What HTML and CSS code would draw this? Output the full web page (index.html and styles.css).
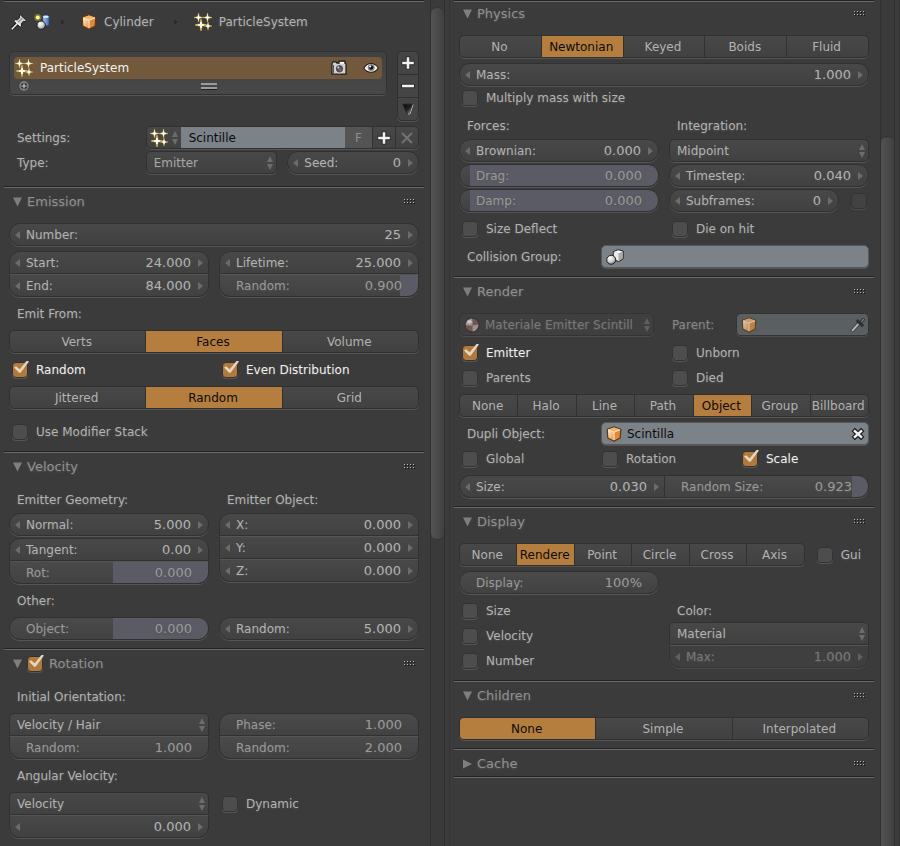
FILE: index.html
```html
<!DOCTYPE html>
<html lang="en">
<head>
<meta charset="utf-8">
<title>Particle properties</title>
<link rel="stylesheet" href="styles.css">
</head>
<body>
<svg class="defs" aria-hidden="true">
  <defs>
    <linearGradient id="g-cube" x1="0" y1="0" x2="1" y2="1"><stop offset="0" stop-color="#fff0dc"/><stop offset="1" stop-color="#e8913a"/></linearGradient>
    <radialGradient id="g-ball" cx=".38" cy=".32" r=".7"><stop offset="0" stop-color="#fff"/><stop offset=".6" stop-color="#ccc"/><stop offset="1" stop-color="#777"/></radialGradient>
    <linearGradient id="g-blue" x1="0" y1="0" x2="1" y2="0"><stop offset="0" stop-color="#a9c8f0"/><stop offset="1" stop-color="#3c6db5"/></linearGradient>
    <linearGradient id="g-tri" x1="0" y1="0" x2="1" y2="1"><stop offset="0" stop-color="#050505"/><stop offset=".5" stop-color="#222"/><stop offset="1" stop-color="#aaa"/></linearGradient>
  </defs>
  <symbol id="star" viewBox="0 0 10 10"><path d="M5 0 5.8 4.2 10 5 5.8 5.8 5 10 4.2 5.8 0 5 4.2 4.2Z" fill="#b5953f" stroke="#8a7330" stroke-width="1.4" stroke-opacity=".7"/><path d="M5 .4V9.6M.4 5H9.6" stroke="#e3ca70" stroke-width="1.1"/><path d="M5 2.5V7.5M2.5 5H7.5" stroke="#fff" stroke-width="1.4"/><circle cx="5" cy="5" r="1.4" fill="#fff"/></symbol>
  <symbol id="sparkles" viewBox="0 0 18 18"><use href="#star" x="0" y="0" width="9" height="9"/><use href="#star" x="9" y="0" width="9" height="9"/><use href="#star" x="1" y="6" width="12" height="12"/><use href="#star" x="10" y="9" width="8" height="8"/></symbol>
  <symbol id="cube" viewBox="0 0 16 16"><path d="M8 .8 14.8 3.2 14.2 12 8 15.3 1.8 12 1.2 3.2Z" fill="#dd8a3b" stroke="#5c3816" stroke-width="1.2" stroke-linejoin="round"/><path d="M8 1.5 14 3.5 8 6 2 3.5Z" fill="#f6b36b"/><path d="M2 4 7.6 6.4V14L2.6 11.5Z" fill="url(#g-cube)"/><path d="M2 3.8 8 6.2 14 3.8M8 6.2V14" fill="none" stroke="#fff0dc" stroke-width="1"/></symbol>
  <symbol id="pin" viewBox="0 0 16 16"><path d="M1 15 6 9.5" stroke="#1c1c1c" stroke-width="3.4"/><path d="M9.3.8 15.2 6.3 14 7.6 12.3 7.3 10.4 9.6 10.6 12 9.2 13.2 2.6 7 3.9 5.7 6.4 5.8 8.7 3.7 8.2 2Z" fill="#dadada" stroke="#1c1c1c" stroke-width="1" stroke-linejoin="round"/><path d="M.8 15.2 6.3 9.4" stroke="#f0f0f0" stroke-width="1.5"/><path d="M7.2 8.2 11.5 4.3" stroke="#8e8e8e" stroke-width="1.4"/><path d="M4.2 6.8 9 11.4" stroke="#fff" stroke-width=".9"/></symbol>
  <symbol id="scene" viewBox="0 0 16 16"><circle cx="3.8" cy="3.5" r="3.6" fill="#77732a"/><circle cx="3.8" cy="3.5" r="2" fill="#fff88c"/><path d="M8.7 2.3Q12 .2 15.2 2.3V11.2Q12 13 8.7 11.2Z" fill="url(#g-blue)" stroke="#25436c"/><ellipse cx="11.9" cy="2.7" rx="2.9" ry="1.2" fill="#dcebff"/><circle cx="7.2" cy="11.2" r="4.2" fill="url(#g-ball)" stroke="#222"/></symbol>
  <symbol id="camera" viewBox="0 0 16 16"><path d="M1 3.5 2.2 1.8H5L6 3.2H8V1.2H14V3.2L15 4V14.2H1Z" fill="#cfcfcf" stroke="#191919" stroke-width="1.2"/><path d="M9 2.8H13" stroke="#fff" stroke-width="1.5"/><path d="M2.5 5V13" stroke="#555"/><circle cx="8.5" cy="8.8" r="4.2" fill="#555" stroke="#fff" stroke-width=".7"/><circle cx="8.5" cy="8.8" r="2.8" fill="#44516d"/><circle cx="9.3" cy="9.8" r="1.6" fill="#b44a42"/><circle cx="7.4" cy="7.5" r="1" fill="#d7e1ff"/></symbol>
  <symbol id="eye" viewBox="0 0 16 16"><path d="M.8 8.2Q4 3.2 8.5 3.5 13 4 15.3 8 12.5 12.4 8 12.3 3.5 12.2.8 8.2Z" fill="#f4f4f4" stroke="#241b12" stroke-width="1.1"/><circle cx="8.2" cy="7.6" r="3.5" fill="#888"/><circle cx="8.2" cy="7.6" r="2.1" fill="#111"/><circle cx="7.2" cy="6.5" r="1" fill="#fff"/></symbol>
  <symbol id="plus" viewBox="0 0 16 16"><path d="M8 1.5V14.5M1.5 8H14.5" stroke="#262626" stroke-width="4.4"/><path d="M8 2.2V13.8M2.2 8H13.8" stroke="#f2f2f2" stroke-width="2.6"/></symbol>
  <symbol id="minus" viewBox="0 0 16 16"><path d="M1 8H15" stroke="#262626" stroke-width="4.4"/><path d="M2 8H14" stroke="#f2f2f2" stroke-width="2.6"/></symbol>
  <symbol id="wedge" viewBox="0 0 16 16"><path d="M2.8 3.2H13.4L10.2 13H7.2Z" fill="url(#g-tri)" stroke="#222"/><path d="M13.2 3.4 10 13H7.8" fill="none" stroke="#b4b4b4" stroke-width="1"/></symbol>
  <symbol id="cross" viewBox="0 0 16 16"><path d="M3 3 13 13M13 3 3 13" stroke="currentColor" stroke-width="2"/></symbol>
  <symbol id="clear" viewBox="0 0 16 16"><path d="M3.2 3.6 12.8 12.4M12.8 3.6 3.2 12.4" stroke="#1b1b1b" stroke-width="4.8"/><path d="M4 4.3 12 11.7M12 4.3 4 11.7" stroke="#f6f6f6" stroke-width="2.4"/></symbol>
  <symbol id="updown" viewBox="0 0 8 16"><path d="M4 1 7 7H1ZM4 15 1 9H7Z" fill="currentColor"/></symbol>
  <symbol id="left" viewBox="0 0 6 8"><path d="M5 0V8L0 4Z" fill="currentColor"/></symbol>
  <symbol id="right" viewBox="0 0 6 8"><path d="M1 0V8L6 4Z" fill="currentColor"/></symbol>
  <symbol id="open" viewBox="0 0 10 10"><path d="M0 0H10L5 10Z" fill="currentColor"/></symbol>
  <symbol id="closed" viewBox="0 0 10 10"><path d="M0 0V10L10 5Z" fill="currentColor"/></symbol>
  <symbol id="grip" viewBox="0 0 12 5"><path d="M1 1.5H12M1 4.5H12" stroke="#111" stroke-dasharray="1 2"/><path d="M0 .5H12M0 3.5H12" stroke="#b5b5b5" stroke-dasharray="1 2"/></symbol>
  <symbol id="ring" viewBox="0 0 10 10"><circle cx="5" cy="5" r="4" fill="#333" stroke="#8c8c8c" stroke-width="1.3"/><path d="M5 2.5V7.5M2.5 5H7.5" stroke="#a8a8a8" stroke-width="1.6"/></symbol>
  <symbol id="group" viewBox="0 0 18 16"><path d="M7.3 2.6 12 .8 17.2 2V9.8L12.6 12.6 7.3 10.5Z" fill="#c9c9c9" stroke="#222" stroke-linejoin="round"/><path d="M8 3 12.2 1.5 16.4 2.4 12.6 4Z" fill="#fff"/><path d="M7.9 3.3 12.4 4.4V11.6L7.9 10Z" fill="#ebebeb"/><path d="M12.8 4.4 16.5 2.8V9.5L12.8 11.8Z" fill="#aaa"/><circle cx="5.2" cy="10.8" r="4.5" fill="url(#g-ball)" stroke="#222"/></symbol>
  <symbol id="material" viewBox="0 0 16 16"><circle cx="8" cy="8" r="7" fill="#8a5a55" stroke="#292929"/><path d="M8 1.5Q9 5 8.6 8.5 5 9 1.5 8 1.8 2.5 8 1.5ZM8.6 8.5 14.5 7.4Q14 13.5 8.5 14.6Z" fill="#b5afad"/><ellipse cx="5.4" cy="4.8" rx="2.4" ry="1.9" fill="#f2f2f2"/></symbol>
  <symbol id="dropper" viewBox="0 0 16 16"><path d="M1.6 14.4 9.2 6" stroke="#26292b" stroke-width="3.6"/><path d="M2 14 9.2 6" stroke="#d0d3d6" stroke-width="1.9"/><path d="M7.6 4 12.2 8.2M10.5 5.5 13.2 2.6" stroke="#222" stroke-width="3.2" stroke-linecap="round"/><path d="M11.6 4.6 13.4 2.5" stroke="#8c8c8c" stroke-width="1.2" stroke-linecap="round"/></symbol>
</svg>

<div class="editor">
  <section class="region">
    <div class="content">
      <nav class="crumbs">
        <svg class="icon"><use href="#pin"/></svg>
        <svg class="icon"><use href="#scene"/></svg>
        <svg class="sep"><use href="#right"/></svg>
        <a href="#" class="crumb"><svg class="icon"><use href="#cube"/></svg>Cylinder</a>
        <svg class="sep"><use href="#right"/></svg>
        <a href="#" class="crumb"><svg class="icon big"><use href="#sparkles"/></svg>ParticleSystem</a>
      </nav>
      <div class="context">
        <div class="slots">
          <div class="list">
            <div class="list-item"><svg class="icon big"><use href="#sparkles"/></svg><span class="name">ParticleSystem</span><svg class="icon"><use href="#camera"/></svg><svg class="icon"><use href="#eye"/></svg></div>
            <div class="list-foot"><svg class="ring"><use href="#ring"/></svg><span class="handle"></span></div>
          </div>
          <div class="tools">
            <button aria-label="Add"><svg class="icon"><use href="#plus"/></svg></button>
            <button aria-label="Remove"><svg class="icon"><use href="#minus"/></svg></button>
            <button aria-label="Specials"><svg class="icon"><use href="#wedge"/></svg></button>
          </div>
        </div>
        <div class="stack near">
          <div class="third">
            <label class="text" for="settings">Settings:</label>
            <div class="datablock">
              <button class="browse" aria-label="Browse"><svg class="icon big"><use href="#sparkles"/></svg><svg class="updown"><use href="#updown"/></svg></button>
              <input id="settings" value="Scintille">
              <button class="fake">F</button>
              <button class="square" aria-label="New"><svg class="icon"><use href="#plus"/></svg></button>
              <button class="square dim" aria-label="Unlink"><svg class="icon"><use href="#cross"/></svg></button>
            </div>
          </div>
          <div class="third">
            <label class="text" for="type">Type:</label>
            <div class="halves">
              <div class="menu soft"><select id="type"><option>Emitter</option></select><svg class="updown"><use href="#updown"/></svg></div>
              <div class="num"><svg class="arrow"><use href="#left"/></svg><label for="seed">Seed:</label><input id="seed" value="0"><svg class="arrow"><use href="#right"/></svg></div>
            </div>
          </div>
        </div>
      </div>

      <section class="panel">
        <header><svg class="fold"><use href="#open"/></svg><h2>Emission</h2><svg class="grip"><use href="#grip"/></svg></header>
        <div class="body">
          <div class="num"><svg class="arrow"><use href="#left"/></svg><label for="number">Number:</label><input id="number" value="25"><svg class="arrow"><use href="#right"/></svg></div>
          <div class="halves">
            <div class="joined">
              <div class="num"><svg class="arrow"><use href="#left"/></svg><label for="start">Start:</label><input id="start" value="24.000"><svg class="arrow"><use href="#right"/></svg></div>
              <div class="num"><svg class="arrow"><use href="#left"/></svg><label for="end">End:</label><input id="end" value="84.000"><svg class="arrow"><use href="#right"/></svg></div>
            </div>
            <div class="joined">
              <div class="num"><svg class="arrow"><use href="#left"/></svg><label for="life">Lifetime:</label><input id="life" value="25.000"><svg class="arrow"><use href="#right"/></svg></div>
              <div class="num slider" style="--from:91%"><label for="lrand">Random:</label><input id="lrand" value="0.900"></div>
            </div>
          </div>
          <div class="text">Emit From:</div>
          <div class="seg"><button>Verts</button><button class="on">Faces</button><button>Volume</button></div>
          <div class="halves">
            <label class="check"><input type="checkbox" checked><span>Random</span></label>
            <label class="check"><input type="checkbox" checked><span>Even Distribution</span></label>
          </div>
          <div class="seg"><button>Jittered</button><button class="on">Random</button><button>Grid</button></div>
          <label class="check apart"><input type="checkbox"><span>Use Modifier Stack</span></label>
        </div>
      </section>

      <section class="panel">
        <header><svg class="fold"><use href="#open"/></svg><h2>Velocity</h2><svg class="grip"><use href="#grip"/></svg></header>
        <div class="body">
          <div class="halves">
            <div class="stack near">
              <div class="text">Emitter Geometry:</div>
              <div class="num"><svg class="arrow"><use href="#left"/></svg><label for="normal">Normal:</label><input id="normal" value="5.000"><svg class="arrow"><use href="#right"/></svg></div>
              <div class="joined">
                <div class="num"><svg class="arrow"><use href="#left"/></svg><label for="tangent">Tangent:</label><input id="tangent" value="0.00"><svg class="arrow"><use href="#right"/></svg></div>
                <div class="num slider" style="--from:52%"><label for="rot">Rot:</label><input id="rot" value="0.000"></div>
              </div>
            </div>
            <div class="stack near">
              <div class="text">Emitter Object:</div>
              <div class="joined">
                <div class="num"><svg class="arrow"><use href="#left"/></svg><label for="vx">X:</label><input id="vx" value="0.000"><svg class="arrow"><use href="#right"/></svg></div>
                <div class="num"><svg class="arrow"><use href="#left"/></svg><label for="vy">Y:</label><input id="vy" value="0.000"><svg class="arrow"><use href="#right"/></svg></div>
                <div class="num"><svg class="arrow"><use href="#left"/></svg><label for="vz">Z:</label><input id="vz" value="0.000"><svg class="arrow"><use href="#right"/></svg></div>
              </div>
            </div>
          </div>
          <div class="text">Other:</div>
          <div class="halves">
            <div class="num slider" style="--from:52%"><label for="obj">Object:</label><input id="obj" value="0.000"></div>
            <div class="num"><svg class="arrow"><use href="#left"/></svg><label for="vrand">Random:</label><input id="vrand" value="5.000"><svg class="arrow"><use href="#right"/></svg></div>
          </div>
        </div>
      </section>

      <section class="panel">
        <header><svg class="fold"><use href="#open"/></svg><label class="check title"><input type="checkbox" checked><span>Rotation</span></label><svg class="grip"><use href="#grip"/></svg></header>
        <div class="body">
          <div class="text">Initial Orientation:</div>
          <div class="halves">
            <div class="joined">
              <div class="menu"><select aria-label="Orientation"><option>Velocity / Hair</option></select><svg class="updown"><use href="#updown"/></svg></div>
              <div class="num slider"><label for="orand">Random:</label><input id="orand" value="1.000"></div>
            </div>
            <div class="joined">
              <div class="num slider"><label for="phase">Phase:</label><input id="phase" value="1.000"></div>
              <div class="num slider"><label for="prand">Random:</label><input id="prand" value="2.000"></div>
            </div>
          </div>
          <div class="text">Angular Velocity:</div>
          <div class="halves">
            <div class="joined">
              <div class="menu"><select aria-label="Angular velocity mode"><option>Velocity</option></select><svg class="updown"><use href="#updown"/></svg></div>
              <div class="num"><svg class="arrow"><use href="#left"/></svg><input aria-label="Angular velocity" value="0.000"><svg class="arrow"><use href="#right"/></svg></div>
            </div>
            <label class="check"><input type="checkbox"><span>Dynamic</span></label>
          </div>
        </div>
      </section>
    </div>
    <div class="track"><div class="thumb upper"></div></div>
  </section>

  <section class="region">
    <div class="content">
      <section class="panel">
        <header><svg class="fold"><use href="#open"/></svg><h2>Physics</h2><svg class="grip"><use href="#grip"/></svg></header>
        <div class="body">
          <div class="seg"><button>No</button><button class="on">Newtonian</button><button>Keyed</button><button>Boids</button><button>Fluid</button></div>
          <div class="stack">
            <div class="num"><svg class="arrow"><use href="#left"/></svg><label for="mass">Mass:</label><input id="mass" value="1.000"><svg class="arrow"><use href="#right"/></svg></div>
            <label class="check"><input type="checkbox"><span>Multiply mass with size</span></label>
          </div>
          <div class="halves">
            <div class="stack near">
              <div class="text">Forces:</div>
              <div class="num"><svg class="arrow"><use href="#left"/></svg><label for="brown">Brownian:</label><input id="brown" value="0.000"><svg class="arrow"><use href="#right"/></svg></div>
              <div class="num slider" style="--from:5%"><label for="drag">Drag:</label><input id="drag" value="0.000"></div>
              <div class="num slider" style="--from:5%"><label for="damp">Damp:</label><input id="damp" value="0.000"></div>
            </div>
            <div class="stack near">
              <div class="text">Integration:</div>
              <div class="menu"><select aria-label="Integration"><option>Midpoint</option></select><svg class="updown"><use href="#updown"/></svg></div>
              <div class="num"><svg class="arrow"><use href="#left"/></svg><label for="step">Timestep:</label><input id="step" value="0.040"><svg class="arrow"><use href="#right"/></svg></div>
              <div class="line">
                <div class="num"><svg class="arrow"><use href="#left"/></svg><label for="sub">Subframes:</label><input id="sub" value="0"><svg class="arrow"><use href="#right"/></svg></div>
                <label class="check bare"><input type="checkbox" aria-label="Adaptive" disabled></label>
              </div>
            </div>
          </div>
          <div class="halves">
            <label class="check"><input type="checkbox"><span>Size Deflect</span></label>
            <label class="check"><input type="checkbox"><span>Die on hit</span></label>
          </div>
          <div class="named">
            <label class="text" for="coll">Collision Group:</label>
            <div class="pick"><svg class="icon big"><use href="#group"/></svg><input id="coll" value=""></div>
          </div>
        </div>
      </section>

      <section class="panel">
        <header><svg class="fold"><use href="#open"/></svg><h2>Render</h2><svg class="grip"><use href="#grip"/></svg></header>
        <div class="body">
          <div class="line material">
            <div class="menu off"><svg class="icon"><use href="#material"/></svg><select aria-label="Material" disabled><option>Materiale Emitter Scintill</option></select><svg class="updown"><use href="#updown"/></svg></div>
            <label class="text faint" for="parent">Parent:</label>
            <div class="pick off"><svg class="icon"><use href="#cube"/></svg><input id="parent" value="" disabled><svg class="icon"><use href="#dropper"/></svg></div>
          </div>
          <div class="stack near">
            <div class="halves">
              <label class="check"><input type="checkbox" checked><span>Emitter</span></label>
              <label class="check"><input type="checkbox"><span>Unborn</span></label>
            </div>
            <div class="halves">
              <label class="check"><input type="checkbox"><span>Parents</span></label>
              <label class="check"><input type="checkbox"><span>Died</span></label>
            </div>
          </div>
          <div class="seg"><button>None</button><button>Halo</button><button>Line</button><button>Path</button><button class="on">Object</button><button>Group</button><button>Billboard</button></div>
          <div class="stack near">
            <div class="named">
              <label class="text" for="dupli">Dupli Object:</label>
              <div class="pick"><svg class="icon"><use href="#cube"/></svg><input id="dupli" value="Scintilla"><button aria-label="Clear"><svg class="icon"><use href="#clear"/></svg></button></div>
            </div>
            <div class="thirds">
              <label class="check"><input type="checkbox"><span>Global</span></label>
              <label class="check"><input type="checkbox"><span>Rotation</span></label>
              <label class="check"><input type="checkbox" checked><span>Scale</span></label>
            </div>
          </div>
          <div class="abreast">
            <div class="num"><svg class="arrow"><use href="#left"/></svg><label for="size">Size:</label><input id="size" value="0.030"><svg class="arrow"><use href="#right"/></svg></div>
            <div class="num slider" style="--from:92%"><label for="rsize">Random Size:</label><input id="rsize" value="0.923"></div>
          </div>
        </div>
      </section>

      <section class="panel">
        <header><svg class="fold"><use href="#open"/></svg><h2>Display</h2><svg class="grip"><use href="#grip"/></svg></header>
        <div class="body">
          <div class="line gui">
            <div class="seg"><button>None</button><button class="on">Rendere</button><button>Point</button><button>Circle</button><button>Cross</button><button>Axis</button></div>
            <label class="check"><input type="checkbox"><span>Gui</span></label>
          </div>
          <div class="halves">
            <div class="num slider"><label for="disp">Display:</label><input id="disp" value="100%"></div>
          </div>
          <div class="halves">
            <div class="stack near">
              <label class="check"><input type="checkbox"><span>Size</span></label>
              <label class="check"><input type="checkbox"><span>Velocity</span></label>
              <label class="check"><input type="checkbox"><span>Number</span></label>
            </div>
            <div class="stack">
              <label class="text" for="color">Color:</label>
              <div class="joined">
                <div class="menu"><select id="color"><option>Material</option></select><svg class="updown"><use href="#updown"/></svg></div>
                <div class="num off"><svg class="arrow"><use href="#left"/></svg><label for="max">Max:</label><input id="max" value="1.000" disabled><svg class="arrow"><use href="#right"/></svg></div>
              </div>
            </div>
          </div>
        </div>
      </section>

      <section class="panel">
        <header><svg class="fold"><use href="#open"/></svg><h2>Children</h2><svg class="grip"><use href="#grip"/></svg></header>
        <div class="body">
          <div class="seg"><button class="on">None</button><button>Simple</button><button>Interpolated</button></div>
        </div>
      </section>

      <section class="panel last">
        <header><svg class="fold"><use href="#closed"/></svg><h2>Cache</h2><svg class="grip"><use href="#grip"/></svg></header>
      </section>
    </div>
    <div class="track"><div class="thumb lower"></div></div>
  </section>
</div>
</body>
</html>
```
FILE: styles.css
```css
:root {
  --bg: #3b3b3b;
  --edge: #313131;
  --glow: #555;
  --text: #b2b2b2;
  --soft: #999;
  --accent: #b57d3e;
  --field: #7b8288;
  --from: 100%;
}

* { box-sizing: border-box; }

body {
  margin: 0;
  background: var(--bg);
  color: var(--text);
  font: 12px/16px "DejaVu Sans", sans-serif;
}

.defs { position: absolute; width: 0; height: 0; }

button, input, select {
  font: inherit;
  color: inherit;
  background: none;
  border: 0;
  padding: 0;
  margin: 0;
  min-width: 0;
  opacity: 1;
}

svg { display: block; flex: none; }

.icon { width: 16px; height: 16px; }
.icon.big { width: 18px; height: 18px; }

.editor {
  display: grid;
  grid-template-columns: 1fr 1fr;
  min-height: 100vh;
}

.region {
  display: flex;
  gap: 6px;
  padding: 0 4px;
  border-right: 1px solid #353535;
  overflow: hidden;
}

.content { flex: 1; min-width: 0; border-top: 1px solid #222; box-shadow: inset 0 1px #6a6a6a; }

.track {
  display: flex;
  flex-direction: column;
  width: 15px;
  border: solid #303030;
  border-width: 0 1px;
  background: #3a3a3a;
}

.thumb { background: linear-gradient(90deg, #535353, #404040); border: 1px solid #343434; border-width: 1px 0; }
.thumb.upper { height: 63%; margin-top: 7px; border-radius: 7px; }
.thumb.lower { flex: 1; margin-top: 136px; border-bottom: 0; border-radius: 7px 7px 0 0; }

/* Breadcrumbs and particle slots */
.crumbs { display: flex; align-items: center; height: 42px; padding-left: 7px; gap: 7px; }
.crumb { display: flex; align-items: center; gap: 7px; color: var(--text); text-decoration: none; text-shadow: 0 1px 2px #5a5a5a; }
.sep { width: 5px; height: 6px; margin: 0 9px 0 3px; color: #2b2b2b; }
.crumb + .sep { margin: 0 9px 0 12px; }

.context { padding: 8px 5px 12px; }
.slots { display: flex; gap: 10px; align-items: flex-start; margin-bottom: 5px; }

.list {
  flex: 1;
  padding: 5px 4px 2px;
  background: linear-gradient(#414141, #484848);
  border: 1px solid var(--edge);
  border-radius: 5px;
  box-shadow: 0 1px var(--glow);
}

.list-item {
  display: flex;
  align-items: center;
  gap: 16px;
  height: 22px;
  padding: 0 3px 0 1px;
  border-radius: 4px;
  background: #73593b;
  color: #f2f2f2;
}
.list-item .name { flex: 1; margin-left: -9px; }

.list-foot { display: grid; grid-template-columns: 21fr 16px 19fr; align-items: center; height: 13px; padding-left: 5px; }
.ring { width: 10px; height: 10px; }
.handle { height: 6px; border: solid #9c9c9c; border-width: 2px 0; box-shadow: 0 1px #222; }

.tools {
  width: 22px;
  border: 1px solid var(--edge);
  border-radius: 5px;
  background: #454545;
  box-shadow: 0 1px var(--glow);
}
.tools button { display: grid; place-items: center; width: 100%; height: 22px; }
.tools button + button { height: 23px; border-top: 1px solid var(--edge); }

/* Panels */
.panel { border-top: 1px solid #222; box-shadow: inset 0 1px #6a6a6a; }
.panel:first-child { margin-top: -3px; }
.region .panel:first-child { border-color: transparent; box-shadow: none; }
.panel.last { border-bottom: 1px solid #222; box-shadow: inset 0 1px #6a6a6a, 0 1px #6a6a6a; }

header { display: flex; align-items: center; gap: 5px; height: 27px; padding: 2px 8px 0 9px; color: #8f8f8f; }
h2 { flex: 1; margin: 0; font: 13px/16px "DejaVu Sans", sans-serif; text-shadow: 0 1px 2px #5a5a5a; }
.fold { width: 9px; height: 10px; color: #7e7e7e; }
.grip { width: 12px; height: 5px; }

.body { display: flex; flex-direction: column; gap: 5px; padding: 9px 5px 8px; }

.stack, .joined { display: flex; flex-direction: column; min-width: 0; }
.near { gap: 2px; }
.halves { display: grid; grid-template-columns: 1fr 1fr; gap: 10px; align-items: start; }
.thirds { display: grid; grid-template-columns: 1fr 1fr 1fr; gap: 10px; }
.third { display: grid; grid-template-columns: 1fr 2fr; }
.named { display: grid; grid-template-columns: 142px 1fr; }
.abreast { display: grid; grid-template-columns: 1fr 1fr; }
.line { display: flex; }

.text { height: 23px; padding: 4px 8px; text-shadow: 0 1px 2px #5a5a5a; white-space: nowrap; }
.faint { color: #858585; }

/* Widgets, each with a one pixel highlight under it */
.num, .menu, .seg, .pick, .datablock {
  display: flex;
  align-items: center;
  min-width: 0;
  height: 23px;
  border: 1px solid var(--edge);
  border-radius: 5px;
  background: linear-gradient(#484848, #414141);
  box-shadow: 0 1px var(--glow);
}

.num { flex: 1 0 auto; gap: 5px; padding: 0 5px; border-radius: 11px; }
.num label { flex: none; }
.num input { flex: 1; width: 20px; margin-right: 1px; font-size: 13px; text-align: right; }
.num label, .num input { text-shadow: 0 1px 2px #555; }
.arrow { width: 6px; height: 8px; color: #6c6c6c; }

.slider {
  padding: 0 15px 0 16px;
  color: var(--soft);
  background:
    linear-gradient(90deg, transparent var(--from), #5b5b65 var(--from)),
    linear-gradient(#4a4a4a, #424242);
}

.joined > :not(:last-child) { border-bottom-left-radius: 0; border-bottom-right-radius: 0; }
.joined > :not(:first-child) { border-top-left-radius: 0; border-top-right-radius: 0; border-top-color: var(--glow); }
.abreast > :first-child { border-top-right-radius: 0; border-bottom-right-radius: 0; border-right: 0; }
.abreast > :last-child { border-top-left-radius: 0; border-bottom-left-radius: 0; }

.menu { padding: 0 2px 0 7px; }
.menu select { flex: 1; appearance: none; height: 20px; text-shadow: 0 1px 2px #555; }
.menu.soft { color: #a5a5a5; }
.updown { width: 8px; height: 16px; color: #6c6c6c; }

.seg button { flex: 1 1 0; height: 21px; padding-right: 2px; text-align: center; }
.seg button + button { border-left: 1px solid var(--edge); }
.seg button.on { background: var(--accent); color: #0c0c0c; }
.seg button:first-child { border-radius: 4px 0 0 4px; }

.pick { gap: 5px; padding: 0 2px 0 4px; background: var(--field); border-color: #555a5e; color: #0c0c0c; }
.pick input { flex: 1; }

.datablock > * { height: 21px; }
.datablock input { flex: 1; padding-left: 8px; background: var(--field); color: #0c0c0c; }
.browse { display: flex; align-items: center; justify-content: space-between; width: 34px; padding: 0 2px 0 3px; }
.fake { width: 27px; background: #545454; color: #8f8f8f; }
.square { display: grid; place-items: center; width: 23px; border-left: 1px solid var(--edge); }
.square.dim { color: #727272; }

.off { color: #787878; background: #3f3f3f; box-shadow: 0 1px #4b4b4b; border-color: #343434; }
.off > svg { opacity: 0.75; }
.off select, .off input { color: #787878; opacity: 1; }
.pick.off { background: #5a5f62; }

/* Checkboxes */
.check { display: flex; align-items: center; gap: 8px; height: 23px; padding-left: 3px; white-space: nowrap; }
.check span { text-shadow: 0 1px 2px #555; }
.check input {
  appearance: none;
  position: relative;
  flex: none;
  width: 16px;
  height: 16px;
  border: 1px solid #333;
  border-radius: 4px;
  background: #4d4d4d;
  box-shadow: 0 1px #555;
}
.check input:checked { background: #b07a3d; }
.check input:checked::after {
  content: "";
  position: absolute;
  inset: -2px -2px 3px 1px;
  background: #e4d5bf;
  clip-path: polygon(0 54%, 14% 44%, 38% 68%, 86% 0, 100% 8%, 44% 94%, 34% 94%);
}
.check input:checked + span { color: #f0f0f0; }
.check input:disabled { background: #424242; box-shadow: 0 1px #4b4b4b; }
.apart { margin-top: 6px; }
.check.title { flex: 1; padding-left: 0; gap: 6px; font-size: 13px; }
.check.title input:checked + span { color: #8f8f8f; }

.bare { padding: 0 2px 0 12px; }
.material .menu { flex: 3 1 0; padding: 0 2px 0 4px; gap: 5px; }
.material .text { padding: 4px 22px 4px 18px; }
.material .pick { flex: 2 1 0; }
.gui { gap: 9px; }
.gui .seg { flex: 1; }
.gui .check { padding-right: 8px; }
```
